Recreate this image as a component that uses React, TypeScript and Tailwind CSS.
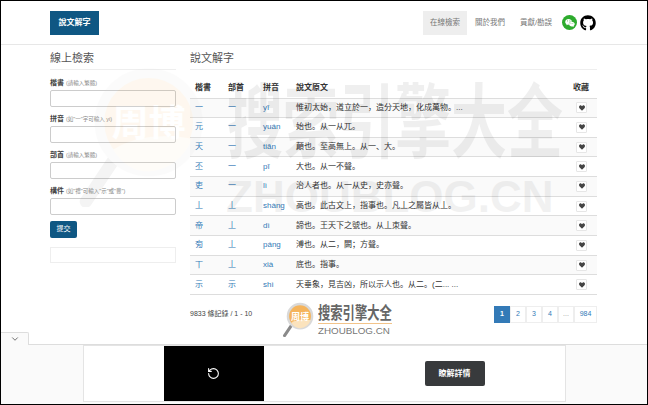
import { FC } from "react";
import { FaGithub, FaHeart, FaWeixin } from "react-icons/fa";
import { LuChevronDown, LuRotateCcw } from "react-icons/lu";

const rows = [
  ["一", "一", "yī", "惟初太始，道立於一，造分天地，化成萬物。..."],
  ["元", "一", "yuán", "始也。从一从兀。"],
  ["天", "一", "tiān", "顛也。至高無上。从一、大。"],
  ["丕", "一", "pī", "大也。从一不聲。"],
  ["吏", "一", "lì", "治人者也。从一从史，史亦聲。"],
  ["丄", "丄", "shàng", "高也。此古文上，指事也。凡丄之屬皆从丄。"],
  ["帝", "丄", "dì", "諦也。王天下之號也。从丄朿聲。"],
  ["㫄", "丄", "páng", "溥也。从二，闕；方聲。"],
  ["丅", "丄", "xià", "底也。指事。"],
  ["示", "示", "shì", "天垂象，見吉凶，所以示人也。从二。(二... ..."],
];

const fields = [
  ["楷書", "(請輸入繁體)"],
  ["拼音", "(如\"一\"字可輸入 yi)"],
  ["部首", "(請輸入繁體)"],
  ["構件", "(如\"禮\"可輸入\"示\"或\"豊\")"],
];

const pages = ["1", "2", "3", "4", "...", "984"];

const Logo: FC<{ className: string }> = ({ className }) => (
  <svg viewBox="0 0 100 104" className={className}>
    <path d="M30 70 L10 100" stroke="#8a8a8a" strokeWidth="9" strokeLinecap="round" />
    <circle cx="56" cy="42" r="36" fill="#f5b45c" stroke="#d9d9d9" strokeWidth="7" />
    <path d="M30 62 Q52 48 88 54 Q78 76 56 78 Q40 78 30 62Z" fill="#fbe3bd" />
    <text x="56" y="52" textAnchor="middle" fontSize="27" fontWeight="700" fill="#ffffff">周博</text>
  </svg>
);

const App: FC = () => {
  return (
    <div className="relative h-[405px] w-[648px] overflow-hidden border-y border-l border-r border-black bg-white font-['Liberation_Sans','Noto_Sans_CJK_SC',sans-serif] text-[8px] text-[#333]">
      <header className="flex h-[44px] items-center border-b border-[#e7e7e7] pl-[49px] pr-[51px]">
        <div className="flex h-[24px] w-[49px] items-center justify-center bg-[#0f5783] text-[8px] font-bold text-white">
          說文解字
        </div>
        <nav className="ml-auto flex items-center text-[7.5px] text-[#777]">
          <span className="flex h-[24px] w-[44px] items-center justify-center bg-[#eeeeee]">在線檢索</span>
          <span className="ml-[8px] w-[31px]">關於我們</span>
          <span className="ml-[14px] w-[33px]">貢獻/勘誤</span>
          <span className="ml-[9px] flex h-[15px] w-[15px] items-center justify-center rounded-full bg-[#2dab2d] text-white">
            <FaWeixin className="h-[10px] w-[10px]" />
          </span>
          <FaGithub className="ml-[3px] h-[16px] w-[16px] text-black" />
        </nav>
      </header>

      <main className="flex pl-[49px] pr-[50px]">
        <aside className="w-[126px] shrink-0">
          <h2 className="mt-[5px] border-b border-[#eeeeee] pb-[3px] text-[11px] leading-[16px] text-[#555]">線上檢索</h2>
          <form className="mt-[8px] flex flex-col">
            {fields.map(([label, hint]) => (
              <div key={label} className="mb-[7px] flex flex-col">
                <label className="mb-[3px] h-[9px] text-[7px] leading-[9px] font-bold text-[#444]">
                  {label} <span className="text-[5.5px] font-normal text-[#888]">{hint}</span>
                </label>
                <input className="h-[17px] rounded-[2px] border border-[#cccccc] bg-white" />
              </div>
            ))}
            <button type="button" className="-mt-[1px] h-[17px] w-[27px] rounded-[2px] bg-[#0f5783] text-[7px] text-white">
              提交
            </button>
            <div className="mt-[9px] h-[16px] border border-[#eeeeee]" />
          </form>
        </aside>

        <section className="ml-[14px] flex-1">
          <h2 className="mt-[5px] border-b border-[#eeeeee] pb-[3px] text-[11px] leading-[16px] text-[#555]">說文解字</h2>
          <table className="mt-[8px] w-full table-fixed border-collapse border-b border-[#dddddd] text-[8px]">
            <thead>
              <tr className="h-[20px] text-left font-bold">
                <th className="w-[33px] pl-[5px]">楷書</th>
                <th className="w-[35px] pl-[5px]">部首</th>
                <th className="w-[33px] pl-[5px]">拼音</th>
                <th className="pl-[5px]">說文原文</th>
                <th className="w-[29px] pl-[5px]">收藏</th>
              </tr>
            </thead>
            <tbody>
              {rows.map((row, i) => (
                <tr key={row[2]} className={`h-[19.67px] border-t border-[#dddddd] ${i % 2 === 0 ? "bg-[#f9f9f9]/80" : ""}`}>
                  <td className="pl-[5px] text-[#337ab7]">{row[0]}</td>
                  <td className="pl-[5px] text-[#337ab7]">{row[1]}</td>
                  <td className="pl-[5px] text-[#337ab7]">{row[2]}</td>
                  <td className="truncate pl-[5px] text-[#333]">{row[3]}</td>
                  <td className="pl-[8px]">
                    <span className="flex h-[11px] w-[11px] items-center justify-center rounded-[1px] border border-[#e6e6e6] bg-white">
                      <FaHeart className="h-[6px] w-[6px] text-[#444]" />
                    </span>
                  </td>
                </tr>
              ))}
            </tbody>
          </table>
          <div className="mt-[11px] flex items-center justify-between">
            <span className="text-[7px] text-[#444]">9833 條記錄 / 1 - 10</span>
            <div className="flex">
              {pages.map((p, i) => (
                <span
                  key={p}
                  className={`flex h-[17px] items-center justify-center border text-[7px] ${p === "984" ? "w-[23px]" : "w-[16px]"} ${i === 0 ? "border-[#337ab7] bg-[#337ab7] font-bold text-white" : "border-[#eeeeee] text-[#337ab7]"} ${p === "..." ? "text-[#999]" : ""}`}
                >
                  {p}
                </span>
              ))}
            </div>
          </div>
        </section>
      </main>

      {/* faint watermark over the page */}
      <div className="pointer-events-none absolute left-[71px] top-[64px] opacity-[0.09]">
        <Logo className="h-[142px] w-[137px]" />
      </div>
      <div className="pointer-events-none absolute left-[226px] top-[70px] scale-y-[1.45] text-[56px] leading-[104px] font-bold whitespace-nowrap text-black opacity-[0.06]">
        搜索引擎大全
      </div>
      <div className="pointer-events-none absolute left-[225px] top-[172px] text-[44px] leading-[48px] font-bold whitespace-nowrap text-black opacity-[0.05]">
        ZHOUBLOG.CN
      </div>

      {/* small watermark */}
      <div className="pointer-events-none absolute left-[280px] top-[301px] flex items-start">
        <Logo className="h-[35px] w-[34px]" />
        <div className="ml-[3px] flex flex-col pt-[3px]">
          <span className="scale-y-[1.35] text-[12.3px] leading-[18px] font-bold whitespace-nowrap text-[#666]">搜索引擎大全</span>
          <span className="border-t border-[#f2c48a] text-[9.8px] leading-[13px] text-[#777]">ZHOUBLOG.CN</span>
        </div>
      </div>

      {/* ad bar */}
      <div className="absolute inset-x-0 bottom-0 h-[60px] border-t border-[#dddddd] bg-[#fafafa]">
        <div className="absolute -top-[13px] left-0 flex h-[13px] w-[28px] items-center justify-center rounded-tr-[2px] border-r border-t border-[#dddddd] bg-[#fafafa] text-[#555]">
          <LuChevronDown className="h-[10px] w-[10px]" />
        </div>
        <div className="mx-auto flex h-[57px] w-[483px] items-center border border-[#e4e4e4] bg-white">
          <div className="ml-[80px] flex h-full w-[100px] items-center justify-center bg-black text-white">
            <LuRotateCcw className="h-[13px] w-[13px]" />
          </div>
          <button type="button" className="ml-[161px] h-[25px] w-[60px] rounded-[2px] bg-[#383a3c] text-[8px] font-bold text-white">
            瞭解詳情
          </button>
        </div>
      </div>
    </div>
  );
};

export default App;
